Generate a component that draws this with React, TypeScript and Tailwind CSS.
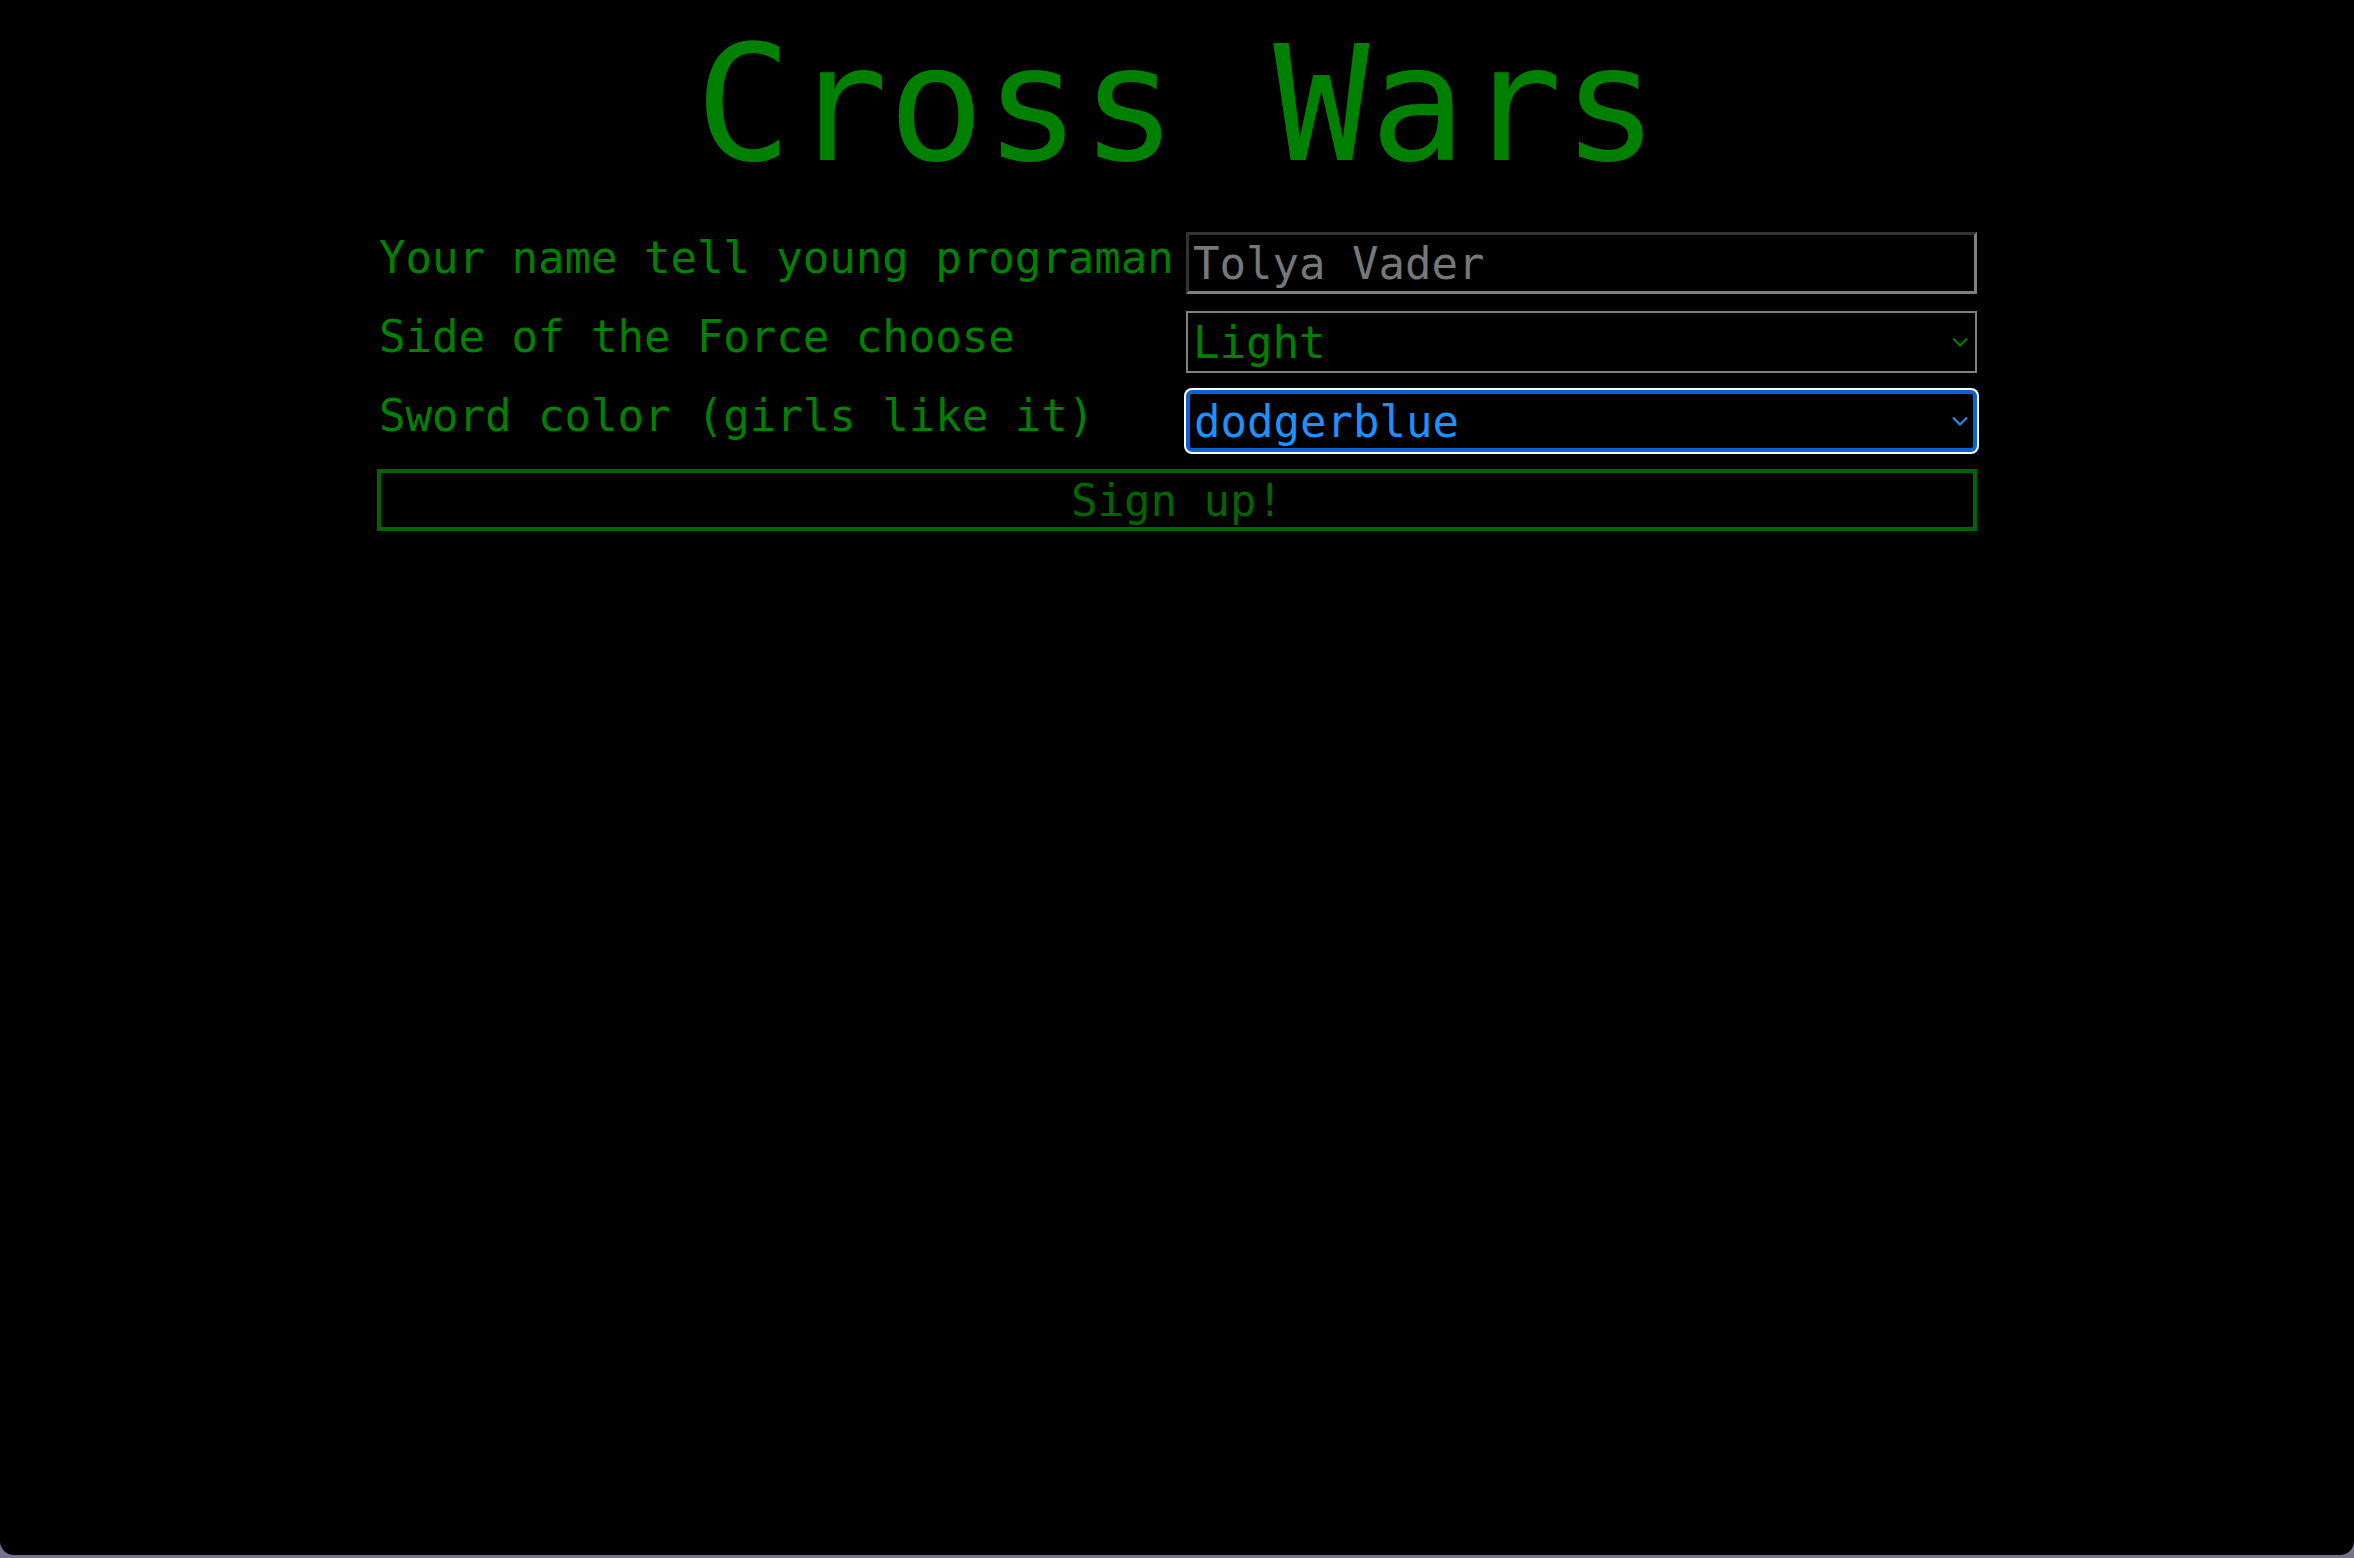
import { useState } from 'react'

const green = 'text-[#008000]'

function Chevron({ color }: { color: string }) {
  return (
    <svg
      className="pointer-events-none absolute right-[9px] top-1/2 -translate-y-1/2"
      width="16"
      height="10"
      viewBox="0 0 16 10"
      fill="none"
    >
      <path d="M1 1.5 L8 8.5 L15 1.5" stroke={color} strokeWidth="2" />
    </svg>
  )
}

export default function App() {
  const [name, setName] = useState('Tolya Vader')
  const [side, setSide] = useState('Light')
  const [color, setColor] = useState('dodgerblue')

  return (
    <div className="min-h-screen bg-[#77728f]">
      <div className="h-[1555px] bg-black rounded-b-[14px] font-['DejaVu_Sans_Mono','Liberation_Mono',monospace]">
        <h1 className={`pt-[12px] text-center text-[160px] leading-[186px] ${green}`}>Cross Wars</h1>

        <form
          className="mx-auto mt-[34px] grid w-[1600px] grid-cols-[809px_1fr] items-start gap-y-[17px]"
          onSubmit={e => e.preventDefault()}
        >
          <label className={`pl-[2px] text-[44px] leading-[51px] ${green}`}>Your name tell young programan</label>
          <input
            value={name}
            onChange={e => setName(e.target.value)}
            className="h-[62px] border-[3px] border-t-[#333] border-l-[#333] border-b-[#808080] border-r-[#808080] bg-black pl-[4px] text-[44px] leading-[51px] text-[#777] outline-none"
          />

          <label className={`pl-[2px] text-[44px] leading-[51px] ${green}`}>Side of the Force choose</label>
          <div className="relative">
            <select
              value={side}
              onChange={e => setSide(e.target.value)}
              className={`h-[62px] w-full appearance-none border-2 border-[#808080] bg-black pl-[5px] text-[44px] leading-[51px] outline-none ${green}`}
            >
              <option>Light</option>
              <option>Dark</option>
            </select>
            <Chevron color="#008000" />
          </div>

          <label className={`pl-[2px] text-[44px] leading-[51px] ${green}`}>Sword color (girls like it)</label>
          <div className="relative">
            <select
              value={color}
              onChange={e => setColor(e.target.value)}
              className="h-[62px] w-full appearance-none rounded-[6px] border-[4px] border-[#0a62d4] bg-black pl-[4px] text-[44px] leading-[51px] text-[#1e90ff] outline-none ring-2 ring-white"
            >
              <option>dodgerblue</option>
              <option>red</option>
              <option>green</option>
              <option>purple</option>
            </select>
            <Chevron color="#1e90ff" />
          </div>

          <button
            type="submit"
            className="col-span-2 h-[62px] border-4 border-[#006400] bg-black text-[44px] leading-[51px] text-[#006400]"
          >
            Sign up!
          </button>
        </form>
      </div>
    </div>
  )
}
